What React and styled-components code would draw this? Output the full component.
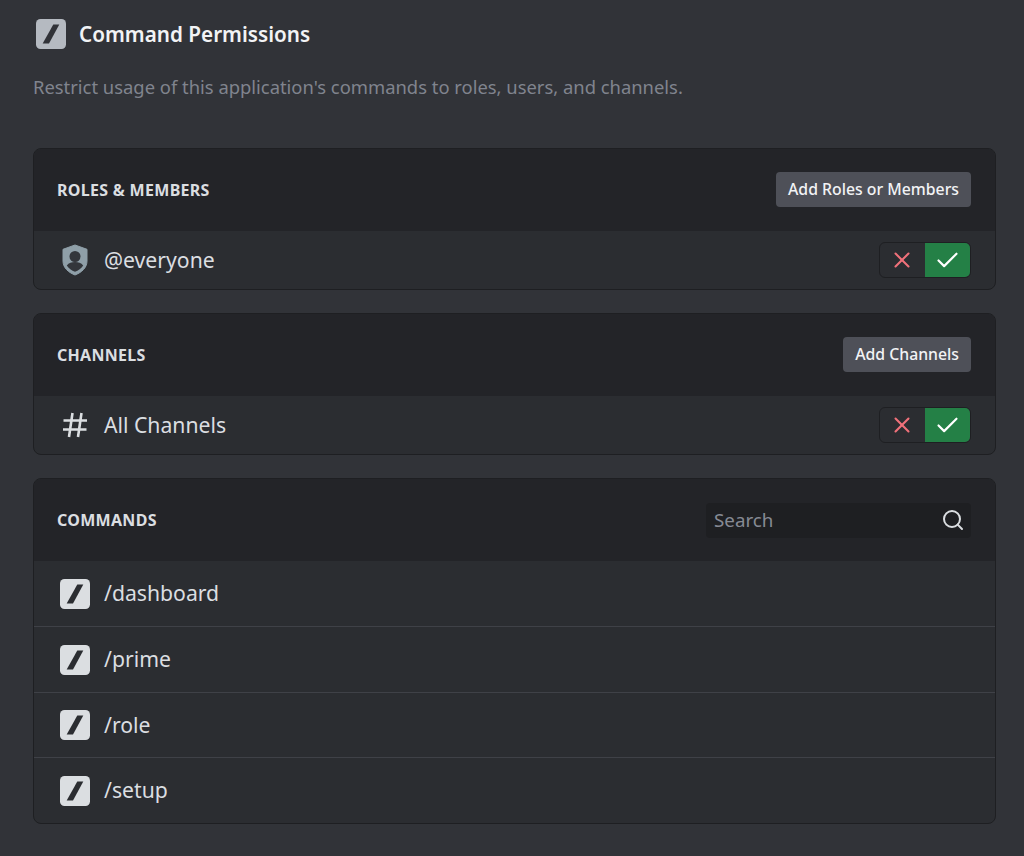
import React from 'react';
import styled, { createGlobalStyle } from 'styled-components';
import { Search as SearchIcon, X, Check } from 'lucide-react';

const Global = createGlobalStyle`
  html, body {
    margin: 0;
    padding: 0;
    background-color: #313338;
  }
`;

const Page = styled.div`
  box-sizing: border-box;
  width: 1024px;
  height: 856px;
  padding: 19px 28px 0 33px;
  background-color: #313338;
  font-family: 'Noto Sans', sans-serif;
  overflow: hidden;
`;

const TitleRow = styled.div`
  display: flex;
  align-items: center;
  gap: 13px;
  height: 30px;
  padding-left: 3px;
`;

const Title = styled.h1`
  margin: 0;
  font-size: 20.7px;
  font-weight: 600;
  line-height: 30px;
  color: #f2f3f5;
`;

const Subtitle = styled.p`
  margin: 23px 0 46px;
  font-size: 18.4px;
  line-height: 30px;
  color: #80848e;
`;

const Panels = styled.div`
  display: flex;
  flex-direction: column;
  gap: 23px;
`;

const Panel = styled.section`
  border: 1px solid #1e1f22;
  border-radius: 8px;
  background-color: #2b2d31;
  overflow: hidden;
`;

const PanelHeader = styled.header`
  display: flex;
  align-items: center;
  justify-content: space-between;
  height: 82px;
  padding: 0 24px 0 23px;
  background-color: #232428;
`;

const PanelLabel = styled.h2`
  margin: 0 0 1px;
  font-size: 16px;
  font-weight: 700;
  letter-spacing: 0.3px;
  color: #dbdee1;
`;

const AddButton = styled.button`
  height: 35px;
  margin-bottom: 2px;
  padding: 0 12px;
  border: none;
  border-radius: 4px;
  background-color: #4e5058;
  color: #f2f3f5;
  font-family: inherit;
  font-size: 15.8px;
  font-weight: 500;
`;

const Row = styled.div`
  display: flex;
  align-items: center;
  height: ${(p) => p.$height || 65}px;
  padding: 0 24px 0 26px;
  border-top: ${(p) => (p.$divided ? '1px solid #3f4147' : 'none')};
`;

const IconSlot = styled.div`
  display: flex;
  align-items: center;
  justify-content: center;
  width: 30px;
  flex-shrink: 0;
  margin-right: 14px;
`;

const RowLabel = styled.span`
  flex: 1;
  padding-bottom: 2px;
  font-size: 21.2px;
  color: #dbdee1;
`;

const Toggle = styled.div`
  display: flex;
  height: 34px;
  border: 1px solid #1e1f22;
  border-radius: 6px;
  overflow: hidden;
`;

const ToggleSide = styled.div`
  display: flex;
  align-items: center;
  justify-content: center;
  box-sizing: border-box;
  width: 45px;
  padding-right: ${(p) => (p.$on ? '1px' : '2px')};
  background-color: ${(p) => (p.$on ? '#248046' : 'transparent')};
  color: ${(p) => (p.$on ? '#ffffff' : '#f0717a')};
`;

const SearchBox = styled.div`
  box-sizing: border-box;
  display: flex;
  align-items: center;
  justify-content: space-between;
  width: 265px;
  height: 35px;
  padding: 0 6px 0 8px;
  border-radius: 4px;
  background-color: #1e1f22;
`;

const SearchText = styled.span`
  font-size: 18.8px;
  color: #868a94;
`;

function SlashBadge({ fill = '#dbdee1', ink = '#2b2d31' }) {
  return (
    <svg width="30" height="30" viewBox="0 0 30 30">
      <rect width="30" height="30" rx="4.500" fill={fill} />
      <path d="M17.300 5.500h6L13 24.500H6.700z" fill={ink} />
    </svg>
  );
}

function RoleShield() {
  return (
    <svg width="26" height="32" viewBox="0 0 26 32">
      <path
        d="M13 1 25 5.300V17c0 6.800-5.400 11.400-12 14C6.400 28.400 1 23.800 1 17V5.300z"
        fill="#8f9fa8"
        stroke="#8f9fa8"
        strokeLinejoin="round"
      />
      <circle cx="13" cy="12.500" r="5.500" fill="#33363b" />
      <path d="M4.800 21.500c2-2.600 4.900-3.500 8.200-3.500s6.200.9 8.200 3.500c-1.800 2.900-4.900 5-8.200 6.300-3.300-1.300-6.400-3.400-8.200-6.300z" fill="#33363b" />
    </svg>
  );
}

function Hash() {
  return (
    <svg width="26" height="26" viewBox="0 0 26 26" fill="none" stroke="#dbdee1" strokeWidth="2.600">
      <path d="M1.500 8.500h23.500M1 17.500h23.500M10.500 1 7 25M19.500 1 16 25" />
    </svg>
  );
}

function PermissionToggle() {
  return (
    <Toggle>
      <ToggleSide>
        <X size={26} strokeWidth={1.9} />
      </ToggleSide>
      <ToggleSide $on>
        <Check size={27} strokeWidth={1.9} />
      </ToggleSide>
    </Toggle>
  );
}

const commands = [
  { name: '/dashboard', height: 65 },
  { name: '/prime', height: 65 },
  { name: '/role', height: 64 },
  { name: '/setup', height: 65 },
];

export default function App() {
  return (
    <Page>
      <Global />
      <TitleRow>
        <SlashBadge fill="#b5bac1" ink="#313338" />
        <Title>Command Permissions</Title>
      </TitleRow>
      <Subtitle>Restrict usage of this application's commands to roles, users, and channels.</Subtitle>
      <Panels>
        <Panel>
          <PanelHeader>
            <PanelLabel>ROLES &amp; MEMBERS</PanelLabel>
            <AddButton>Add Roles or Members</AddButton>
          </PanelHeader>
          <Row $height={58}>
            <IconSlot>
              <RoleShield />
            </IconSlot>
            <RowLabel>@everyone</RowLabel>
            <PermissionToggle />
          </Row>
        </Panel>
        <Panel>
          <PanelHeader>
            <PanelLabel>CHANNELS</PanelLabel>
            <AddButton>Add Channels</AddButton>
          </PanelHeader>
          <Row $height={58}>
            <IconSlot>
              <Hash />
            </IconSlot>
            <RowLabel>All Channels</RowLabel>
            <PermissionToggle />
          </Row>
        </Panel>
        <Panel>
          <PanelHeader>
            <PanelLabel>COMMANDS</PanelLabel>
            <SearchBox>
              <SearchText>Search</SearchText>
              <SearchIcon size={24} color="#dbdee1" strokeWidth={2} />
            </SearchBox>
          </PanelHeader>
          {commands.map((cmd, i) => (
            <Row key={cmd.name} $height={cmd.height} $divided={i > 0}>
              <IconSlot>
                <SlashBadge />
              </IconSlot>
              <RowLabel>{cmd.name}</RowLabel>
            </Row>
          ))}
        </Panel>
      </Panels>
    </Page>
  );
}
